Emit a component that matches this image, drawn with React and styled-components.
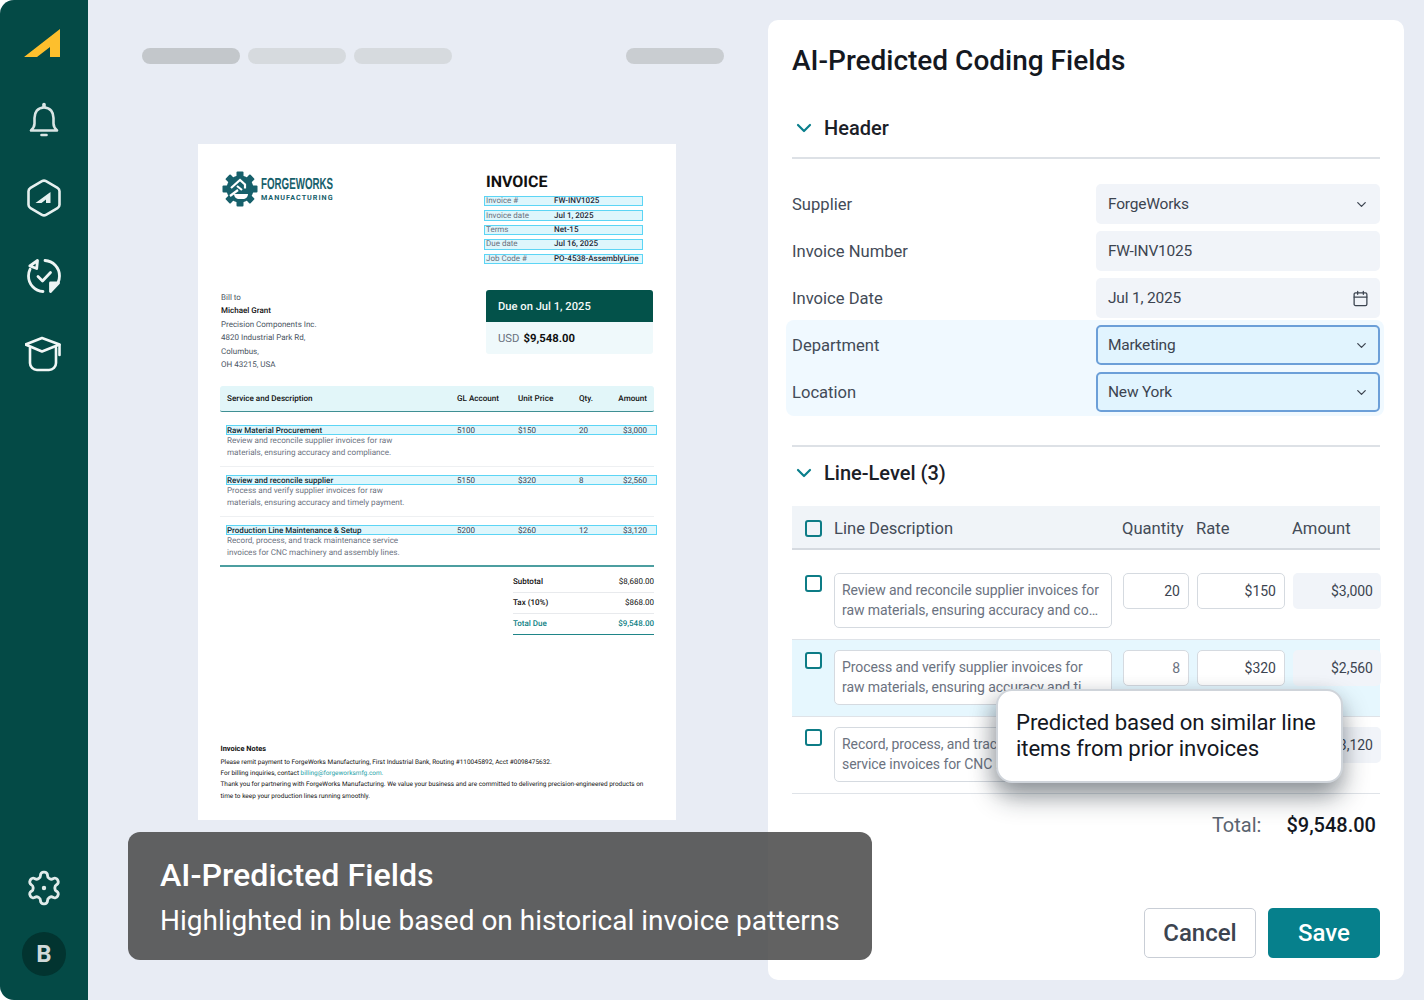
import React from 'react';
import styled, { createGlobalStyle } from 'styled-components';
import { Calendar, ChevronDown } from 'lucide-react';

const GlobalStyle = createGlobalStyle`
  html, body {
    margin: 0;
    padding: 0;
    background: #fff;
  }
  * {
    box-sizing: border-box;
  }
  body {
    font-family: Roboto, "Liberation Sans", sans-serif;
  }
`;

const Page = styled.div`
  position: relative;
  display: flex;
  width: 1424px;
  height: 1000px;
  overflow: hidden;
  background: #e8ecf4;
  border-radius: 14px 0 0 14px;
`;

// sidebar
const Sidebar = styled.nav`
  flex: none;
  display: flex;
  flex-direction: column;
  align-items: center;
  width: 88px;
  height: 100%;
  padding: 3px 0 24px;
  background: #044a46;
`;

const NavSlot = styled.div`
  display: flex;
  align-items: center;
  justify-content: center;
  width: 100%;
  height: 78px;
`;

const SidebarFoot = styled.div`
  display: flex;
  flex-direction: column;
  align-items: center;
  gap: 25px;
  margin-top: auto;
`;

const Avatar = styled.div`
  display: flex;
  align-items: center;
  justify-content: center;
  width: 44px;
  height: 44px;
  border-radius: 50%;
  background: #023430;
  color: #cfd9d8;
  font-size: 24px;
  font-weight: 700;
`;

const LogoSvg = styled.svg`
  margin: 2px 4px 0 0;
`;

// invoice preview side
const Preview = styled.section`
  flex: none;
  width: 680px;
  padding: 48px 44px 0 54px;
`;

const Toolbar = styled.div`
  display: flex;
  gap: 8px;
`;

const Pill = styled.div`
  width: 98px;
  height: 16px;
  border-radius: 8px;
  background: ${(p) => p.$tone};
  margin-left: ${(p) => (p.$push ? 'auto' : '0')};
`;

const Sheet = styled.article`
  display: flex;
  flex-direction: column;
  width: 478px;
  height: 676px;
  margin: 80px 0 0 56px;
  padding: 24px 22px 18px;
  background: #fff;
  color: #111;
  font-size: 8px;
  text-rendering: geometricPrecision;
`;

const SheetTop = styled.div`
  display: flex;
  justify-content: space-between;
`;

const Brand = styled.div`
  display: flex;
  align-items: flex-start;
  gap: 3px;
  margin: 3px 0 0 2px;
  color: #17606b;
`;

const BrandText = styled.div`
  display: flex;
  flex-direction: column;
  padding-top: 6px;
`;

const BrandName = styled.span`
  font-family: "Liberation Sans", sans-serif;
  font-size: 16px;
  line-height: 15px;
  font-weight: 700;
  white-space: nowrap;
  transform: scaleX(0.61);
  transform-origin: left center;
  width: 73px;
`;

const BrandSub = styled.span`
  margin-top: 1px;
  font-size: 7.2px;
  line-height: 9px;
  font-weight: 700;
  letter-spacing: 1px;
  white-space: nowrap;
`;

const InvoiceMeta = styled.div`
  display: flex;
  flex-direction: column;
  width: 159px;
  margin-right: 11px;
`;

const InvoiceTitle = styled.h2`
  margin: 5px 0 5px 2px;
  font-size: 16px;
  line-height: 18px;
  font-weight: 700;
  color: #111;
`;

const MetaRow = styled.div`
  display: flex;
  align-items: center;
  height: 10.4px;
  margin-bottom: 4px;
  padding-left: 1px;
  border: 1px solid #5cd5f5;
  background: #def6fc;
  font-size: 8px;
  line-height: 8px;
`;

const MetaLabel = styled.span`
  width: 68px;
  color: #6b7280;
`;

const MetaValue = styled.span`
  font-weight: 500;
  white-space: nowrap;
  color: #1f2937;
`;

const BillRow = styled.div`
  display: flex;
  justify-content: space-between;
  height: 80px;
  margin-top: 22px;
`;

const BillTo = styled.div`
  margin-left: 1px;
  padding-top: 1px;
  line-height: 13.5px;
  color: #4b5563;
`;

const BillName = styled.div`
  font-weight: 500;
  color: #111;
`;

const DueCard = styled.div`
  width: 167px;
  height: 64px;
  margin-right: 1px;
  border-radius: 3px;
  overflow: hidden;
  background: #eff9fb;
`;

const DueHead = styled.div`
  display: flex;
  align-items: center;
  height: 32px;
  padding: 1px 0 0 12px;
  background: #03524a;
  color: #f3faf8;
  font-size: 11.2px;
  font-weight: 500;
`;

const DueBody = styled.div`
  display: flex;
  align-items: center;
  gap: 4px;
  height: 32px;
  padding: 1px 0 0 12px;
  font-size: 11.3px;
  color: #6b7280;
`;

const DueAmount = styled.strong`
  font-weight: 700;
  color: #111;
`;

const ItemHead = styled.div`
  display: grid;
  grid-template-columns: 230px 61px 61px 30px 1fr;
  align-items: center;
  height: 26px;
  margin-top: 16px;
  padding: 0 7px 0 7px;
  border-radius: 3px 3px 2px 2px;
  border-bottom: 1px solid #3f8f93;
  background: #e2f6f9;
  font-size: 8.1px;
  font-weight: 500;
`;

const RightCell = styled.span`
  text-align: right;
`;

const Item = styled.div`
  padding: ${(p) => (p.$first ? '13px' : '8px')} 0 ${(p) => (p.$last ? '6.3px' : '7.3px')} 6px;
  border-bottom: ${(p) => (p.$last ? '2px solid #4c9ea0' : '1px solid #eef0f2')};
`;

const ItemLine = styled.div`
  display: grid;
  grid-template-columns: 230px 61px 61px 30px 1fr;
  align-items: center;
  width: 431px;
  height: 10px;
  padding-right: 9px;
  border: 1px solid #5cd5f5;
  background: #def6fc;
  font-size: 8px;
  color: #374151;
`;

const ItemName = styled.span`
  font-weight: 500;
  color: #0f2a33;
  white-space: nowrap;
`;

const ItemDesc = styled.p`
  width: 190px;
  margin: 0.5px 0 0 1px;
  font-size: 8.1px;
  line-height: 11.6px;
  color: #6b7280;
`;

const Summary = styled.div`
  display: flex;
  flex-direction: column;
  width: 141px;
  margin: 5px 0 0 auto;
`;

const SummaryRow = styled.div`
  display: flex;
  align-items: center;
  justify-content: space-between;
  height: 21px;
  font-size: 8px;
  color: ${(p) => (p.$total ? '#0e7f85' : '#111')};
  border-bottom: 1px solid ${(p) => (p.$total ? '#1f8588' : '#e8eaed')};
`;

const SummaryLabel = styled.span`
  font-weight: 500;
`;

const Notes = styled.div`
  margin-top: auto;
  padding-left: 0.5px;
  font-size: 6.45px;
  line-height: 11.3px;
  color: #111;
`;

const NotesTitle = styled.div`
  margin-bottom: 3px;
  font-size: 7.4px;
  font-weight: 700;
`;

const MailLink = styled.span`
  color: #27a3a8;
`;

const Caption = styled.div`
  position: absolute;
  left: 128px;
  top: 832px;
  z-index: 3;
  width: 744px;
  height: 128px;
  padding: 24px 32px;
  border-radius: 12px;
  background: rgba(72, 72, 72, 0.86);
  color: #fff;
`;

const CaptionTitle = styled.div`
  font-size: 32.2px;
  line-height: 38px;
  font-weight: 500;
`;

const CaptionText = styled.div`
  margin-top: 8px;
  font-size: 28px;
  line-height: 38px;
  white-space: nowrap;
`;

// coding form side
const Panel = styled.section`
  position: relative;
  display: flex;
  flex-direction: column;
  flex: none;
  width: 636px;
  height: 960px;
  margin-top: 20px;
  padding: 21px 24px 22px;
  border-radius: 10px;
  background: #fff;
  color: #374151;
`;

const PanelTitle = styled.h1`
  margin: 0;
  font-size: 28px;
  line-height: 40px;
  font-weight: 500;
  color: #14181f;
`;

const SectionHead = styled.div`
  display: flex;
  align-items: center;
  gap: 8px;
  height: 30px;
  margin-top: ${(p) => p.$top}px;
  font-size: 20px;
  font-weight: 500;
  color: #1b2027;
`;

const Chevron = styled(ChevronDown)`
  flex: none;
  color: #0a7f8c;
`;

const Divider = styled.div`
  height: 2px;
  margin-top: ${(p) => p.$top}px;
  background: #dde1e6;
`;

const FieldList = styled.div`
  display: flex;
  flex-direction: column;
  gap: 7px;
  margin-top: 25px;
`;

const FieldRow = styled.div`
  display: flex;
  align-items: center;
  justify-content: space-between;
  height: 40px;
  font-size: 16.6px;
  color: #434b57;
`;

const Control = styled.div`
  display: flex;
  align-items: center;
  justify-content: space-between;
  width: 284px;
  height: 40px;
  padding: 0 ${(p) => (p.$ai ? '9px' : '11px')} 0 ${(p) => (p.$ai ? '10px' : '12px')};
  border-radius: 5px;
  font-size: 15.5px;
  letter-spacing: -0.2px;
  color: #3c4450;
  background: ${(p) => (p.$ai ? '#e1f4fe' : '#f1f4f9')};
  border: ${(p) => (p.$ai ? '2px solid #6c9fd8' : '0')};
`;

const AiGroup = styled.div`
  display: flex;
  flex-direction: column;
  gap: 7px;
  margin: -5px -4px -3px -6px;
  padding: 5px 4px 4px 6px;
  border-radius: 8px;
  background: #f0f9ff;
`;

const TableHead = styled.div`
  display: grid;
  grid-template-columns: 42px 278px 77px 96px 96px;
  align-items: center;
  height: 44px;
  margin-top: 18px;
  padding-top: 2px;
  background: #f0f4f8;
  border-bottom: 2px solid #d5dae0;
  font-size: 16.6px;
  color: #434b57;
`;

const HeadLabel = styled.span`
  padding-left: ${(p) => p.$left || 0}px;
  white-space: nowrap;
`;

const Row = styled.div`
  display: grid;
  grid-template-columns: 42px 278px 77px 96px 96px;
  align-items: start;
  padding: ${(p) => (p.$first ? '23px' : '10px')} 0 11px;
  border-bottom: 1px solid #dfe3e8;
  background: ${(p) => (p.$ai ? '#e6f7fe' : 'transparent')};
`;

const Check = styled.span`
  display: block;
  width: 17px;
  height: 17px;
  margin: ${(p) => (p.$head ? '0' : '2px')} 0 0 13px;
  border: 2px solid #0d7c86;
  border-radius: 3px;
  background: ${(p) => (p.$head ? 'transparent' : '#fff')};
`;

const DescBox = styled.div`
  height: 55px;
  padding: 6px 11px 0 7px;
  border: 1px solid #d5dae0;
  border-radius: 5px;
  background: #fff;
  font-size: 14px;
  letter-spacing: -0.07px;
  line-height: 20px;
  color: #6b7280;
`;

const DescLine = styled.div`
  overflow: hidden;
  white-space: nowrap;
  text-overflow: ellipsis;
`;

const NumBox = styled.div`
  display: flex;
  align-items: center;
  justify-content: flex-end;
  justify-self: end;
  width: ${(p) => p.$width}px;
  height: 36px;
  padding-right: 8px;
  border: ${(p) => (p.$calc ? '0' : '1px solid #d5dae0')};
  border-radius: 5px;
  background: ${(p) => (p.$calc ? '#f1f4f9' : '#fff')};
  font-size: 14px;
  color: ${(p) => (p.$muted ? '#6b7280' : '#3c4450')};
`;

const TotalRow = styled.div`
  display: flex;
  justify-content: flex-end;
  align-items: center;
  gap: 25px;
  height: 24px;
  margin-top: 19px;
  padding-right: 4px;
  font-size: 20px;
  color: #5b6470;
`;

const TotalValue = styled.strong`
  font-weight: 500;
  color: #14181f;
`;

const Actions = styled.div`
  display: flex;
  justify-content: flex-end;
  gap: 12px;
  margin-top: auto;
`;

const Button = styled.button`
  width: 112px;
  height: 50px;
  border-radius: 5px;
  font-family: inherit;
  font-size: 24px;
  font-weight: 500;
  color: ${(p) => (p.$primary ? '#fff' : '#3c4450')};
  background: ${(p) => (p.$primary ? '#06808c' : '#fff')};
  border: ${(p) => (p.$primary ? '0' : '1.5px solid #c9ced6')};
`;

const Tooltip = styled.div`
  position: absolute;
  left: 228px;
  top: 669px;
  z-index: 2;
  width: 347px;
  height: 94px;
  padding: 18px 14px 0 18px;
  border: 2px solid #cfd4da;
  border-radius: 16px;
  background: #fff;
  box-shadow: 0 14px 26px rgba(20, 30, 40, 0.42), -6px 6px 20px rgba(20, 30, 40, 0.14);
  font-size: 22.2px;
  letter-spacing: -0.1px;
  line-height: 26px;
  color: #14181f;
`;

const LogoMark = () => (
  <LogoSvg width="36" height="28" viewBox="0 0 36 28">
    <path d="M0 28 L36 0 V28 H26 V18 L13 28 Z" fill="#fdbf2d" />
  </LogoSvg>
);

const BellIcon = () => (
  <svg width="30" height="36" viewBox="0 0 30 36" fill="none" stroke="#d9e5e4" strokeWidth="2.6" strokeLinecap="round" strokeLinejoin="round">
    <path d="M15 5.5c-6.5 0-9.5 5-9.5 10.5v5.5c0 3-1.5 5-3.5 7h26c-2-2-3.500-4-3.500-7V16c0-5.500-3-10.500-9.500-10.500z" />
    <path d="M15 2.500v2" strokeWidth="3.600" />
    <path d="M12.500 33h5" strokeWidth="2.600" />
  </svg>
);

const HexIcon = () => (
  <svg width="34" height="38" viewBox="0 0 34 38" fill="none">
    <path d="M15 2.200a4 4 0 0 1 4 0l11.500 6.600a4 4 0 0 1 2 3.500v13.400a4 4 0 0 1-2 3.500L19 35.800a4 4 0 0 1-4 0L3.500 29.200a4 4 0 0 1-2-3.500V12.300a4 4 0 0 1 2-3.500z" stroke="#e6f0ef" strokeWidth="2.600" />
    <path d="M8.500 24 L23.500 13 V24 H19 V20.500 L14.500 24 Z" fill="#e6f0ef" />
  </svg>
);

const SyncCheckIcon = () => (
  <svg width="36" height="36" viewBox="0 0 36 36" fill="none" stroke="#eef5f4" strokeWidth="2.800" strokeLinecap="round" strokeLinejoin="round">
    <path d="M19 2.500c8 .5 14.500 7 14.500 15.500 0 2.500-.6 4.800-1.600 6.800" />
    <path d="M17 33.500c-8-.5-14.500-7-14.500-15.500 0-2.500.6-4.800 1.600-6.800" />
    <path d="M11.500 2.500l-.8 8-6.900-2.500z" />
    <path d="M24.500 33.500v-8.500h8z" fill="#eef5f4" />
    <path d="M12 18.500l4.500 4.500 8-8.500" />
  </svg>
);

const CapIcon = () => (
  <svg width="38" height="36" viewBox="1 0 38 36" fill="none" stroke="#f2f7f6" strokeWidth="2.600" strokeLinecap="round" strokeLinejoin="round">
    <path d="M18 2 L1.500 8.500 18 15.500 35.500 8.500z" />
    <path d="M35.500 9v10" />
    <path d="M6 12v15a7 7 0 0 0 7 7h12a7 7 0 0 0 7-7V12" />
  </svg>
);

const GearIcon = () => (
  <svg width="38" height="38" viewBox="0 0 24 24" fill="none" stroke="#e0ebea" strokeWidth="1.800" strokeLinecap="round" strokeLinejoin="round">
    <path d="M12.220 2h-.44a2 2 0 0 0-2 2v.18a2 2 0 0 1-1 1.730l-.43.25a2 2 0 0 1-2 0l-.15-.08a2 2 0 0 0-2.730.73l-.22.38a2 2 0 0 0 .73 2.730l.15.1a2 2 0 0 1 1 1.720v.51a2 2 0 0 1-1 1.740l-.15.09a2 2 0 0 0-.73 2.730l.22.38a2 2 0 0 0 2.730.73l.15-.08a2 2 0 0 1 2 0l.43.25a2 2 0 0 1 1 1.730V20a2 2 0 0 0 2 2h.44a2 2 0 0 0 2-2v-.18a2 2 0 0 1 1-1.730l.43-.25a2 2 0 0 1 2 0l.15.08a2 2 0 0 0 2.730-.73l.22-.39a2 2 0 0 0-.73-2.730l-.15-.08a2 2 0 0 1-1-1.740v-.5a2 2 0 0 1 1-1.740l.15-.09a2 2 0 0 0 .73-2.730l-.22-.38a2 2 0 0 0-2.730-.73l-.15.08a2 2 0 0 1-2 0l-.43-.25a2 2 0 0 1-1-1.730V4a2 2 0 0 0-2-2z" />
    <circle cx="12" cy="12" r="1.400" fill="#e0ebea" stroke="none" />
  </svg>
);

const ForgeGear = () => (
  <svg width="36" height="36" viewBox="0 0 36 36">
    <g fill="#17606b">
      <circle cx="18" cy="18" r="13.500" />
      {[0, 45, 90, 135, 180, 225, 270, 315].map((deg) => (
        <rect key={deg} x="14.500" y="0.500" width="7" height="7" rx="1" transform={`rotate(${deg} 18 18)`} />
      ))}
    </g>
    <path d="M9 17l9-8 5 4.500v4M15 15l5 4M8 25l8-6" fill="none" stroke="#fff" strokeWidth="2.200" />
    <path d="M12 23h14c0 3-2.500 5-5 5h-4c-2.500 0-5-2-5-5z" fill="#fff" />
  </svg>
);

const lineItems = [
  {
    name: 'Raw Material Procurement',
    gl: '5100',
    price: '$150',
    qty: '20',
    amount: '$3,000',
    desc: 'Review and reconcile supplier invoices for raw materials, ensuring accuracy and compliance.',
  },
  {
    name: 'Review and reconcile supplier',
    gl: '5150',
    price: '$320',
    qty: '8',
    amount: '$2,560',
    desc: 'Process and verify supplier invoices for raw materials, ensuring accuracy and timely payment.',
  },
  {
    name: 'Production Line Maintenance & Setup',
    gl: '5200',
    price: '$260',
    qty: '12',
    amount: '$3,120',
    desc: 'Record, process, and track maintenance service invoices for CNC machinery and assembly lines.',
  },
];

const metaRows = [
  ['Invoice #', 'FW-INV1025'],
  ['Invoice date', 'Jul 1, 2025'],
  ['Terms', 'Net-15'],
  ['Due date', 'Jul 16, 2025'],
  ['Job Code #', 'PO-4538-AssemblyLine'],
];

const codingRows = [
  {
    lines: ['Review and reconcile supplier invoices for', 'raw materials, ensuring accuracy and compliance.'],
    qty: '20',
    rate: '$150',
    amount: '$3,000',
  },
  {
    lines: ['Process and verify supplier invoices for', 'raw materials, ensuring accuracy and timely payment.'],
    qty: '8',
    rate: '$320',
    amount: '$2,560',
    ai: true,
  },
  {
    lines: ['Record, process, and track maintenance', 'service invoices for CNC machinery and assembly.'],
    qty: '12',
    rate: '$260',
    amount: '$3,120',
  },
];

const Select = ({ value, ai }) => (
  <Control $ai={ai}>
    {value}
    <ChevronDown size={15} strokeWidth={2} color="#3c4450" />
  </Control>
);

const App = () => (
  <Page>
    <GlobalStyle />
    <Sidebar>
      <NavSlot><LogoMark /></NavSlot>
      <NavSlot><BellIcon /></NavSlot>
      <NavSlot><HexIcon /></NavSlot>
      <NavSlot><SyncCheckIcon /></NavSlot>
      <NavSlot><CapIcon /></NavSlot>
      <SidebarFoot>
        <GearIcon />
        <Avatar>B</Avatar>
      </SidebarFoot>
    </Sidebar>

    <Preview>
      <Toolbar>
        <Pill $tone="#c3c7cb" />
        <Pill $tone="#d6dade" />
        <Pill $tone="#d6dade" />
        <Pill $tone="#c9cdd1" $push />
      </Toolbar>
      <Sheet>
        <SheetTop>
          <Brand>
            <ForgeGear />
            <BrandText>
              <BrandName>FORGEWORKS</BrandName>
              <BrandSub>MANUFACTURING</BrandSub>
            </BrandText>
          </Brand>
          <InvoiceMeta>
            <InvoiceTitle>INVOICE</InvoiceTitle>
            {metaRows.map(([label, value]) => (
              <MetaRow key={label}>
                <MetaLabel>{label}</MetaLabel>
                <MetaValue>{value}</MetaValue>
              </MetaRow>
            ))}
          </InvoiceMeta>
        </SheetTop>
        <BillRow>
          <BillTo>
            Bill to
            <BillName>Michael Grant</BillName>
            Precision Components Inc.
            <br />
            4820 Industrial Park Rd,
            <br />
            Columbus,
            <br />
            OH 43215, USA
          </BillTo>
          <DueCard>
            <DueHead>Due on Jul 1, 2025</DueHead>
            <DueBody>
              USD <DueAmount>$9,548.00</DueAmount>
            </DueBody>
          </DueCard>
        </BillRow>
        <ItemHead>
          <span>Service and Description</span>
          <span>GL Account</span>
          <span>Unit Price</span>
          <span>Qty.</span>
          <RightCell>Amount</RightCell>
        </ItemHead>
        {lineItems.map((item, i) => (
          <Item key={item.gl} $first={i === 0} $last={i === lineItems.length - 1}>
            <ItemLine>
              <ItemName>{item.name}</ItemName>
              <span>{item.gl}</span>
              <span>{item.price}</span>
              <span>{item.qty}</span>
              <RightCell>{item.amount}</RightCell>
            </ItemLine>
            <ItemDesc>{item.desc}</ItemDesc>
          </Item>
        ))}
        <Summary>
          <SummaryRow>
            <SummaryLabel>Subtotal</SummaryLabel>
            <span>$8,680.00</span>
          </SummaryRow>
          <SummaryRow>
            <SummaryLabel>Tax (10%)</SummaryLabel>
            <span>$868.00</span>
          </SummaryRow>
          <SummaryRow $total>
            <SummaryLabel>Total Due</SummaryLabel>
            <SummaryLabel>$9,548.00</SummaryLabel>
          </SummaryRow>
        </Summary>
        <Notes>
          <NotesTitle>Invoice Notes</NotesTitle>
          Please remit payment to ForgeWorks Manufacturing, First Industrial Bank, Routing #110045892, Acct #0098475632.
          <br />
          For billing inquiries, contact <MailLink>billing@forgeworksmfg.com.</MailLink>
          <br />
          Thank you for partnering with ForgeWorks Manufacturing. We value your business and are committed to delivering precision-engineered products on time to keep your production lines running smoothly.
        </Notes>
      </Sheet>
    </Preview>

    <Panel>
      <PanelTitle>AI-Predicted Coding Fields</PanelTitle>
      <SectionHead $top={32}>
        <Chevron size={24} strokeWidth={2.2} />
        Header
      </SectionHead>
      <Divider $top={14} />
      <FieldList>
        <FieldRow>Supplier<Select value="ForgeWorks" /></FieldRow>
        <FieldRow>Invoice Number<Control>FW-INV1025</Control></FieldRow>
        <FieldRow>
          Invoice Date
          <Control>
            Jul 1, 2025
            <Calendar size={17} strokeWidth={1.8} color="#3c4450" />
          </Control>
        </FieldRow>
        <AiGroup>
          <FieldRow>Department<Select value="Marketing" ai /></FieldRow>
          <FieldRow>Location<Select value="New York" ai /></FieldRow>
        </AiGroup>
      </FieldList>
      <Divider $top={32} />
      <SectionHead $top={11}>
        <Chevron size={24} strokeWidth={2.2} />
        Line-Level (3)
      </SectionHead>
      <TableHead>
        <Check $head />
        <HeadLabel>Line Description</HeadLabel>
        <HeadLabel $left={10}>Quantity</HeadLabel>
        <HeadLabel $left={7}>Rate</HeadLabel>
        <HeadLabel $left={7}>Amount</HeadLabel>
      </TableHead>
      {codingRows.map((row, i) => (
        <Row key={row.qty} $first={i === 0} $ai={row.ai}>
          <Check />
          <DescBox>
            <DescLine>{row.lines[0]}</DescLine>
            <DescLine>{row.lines[1]}</DescLine>
          </DescBox>
          <NumBox $width={66} $muted={row.ai}>{row.qty}</NumBox>
          <NumBox $width={88}>{row.rate}</NumBox>
          <NumBox $width={88} $calc>{row.amount}</NumBox>
        </Row>
      ))}
      <TotalRow>
        Total:
        <TotalValue>$9,548.00</TotalValue>
      </TotalRow>
      <Actions>
        <Button>Cancel</Button>
        <Button $primary>Save</Button>
      </Actions>
      <Tooltip>Predicted based on similar line items from prior invoices</Tooltip>
    </Panel>

    <Caption>
      <CaptionTitle>AI-Predicted Fields</CaptionTitle>
      <CaptionText>Highlighted in blue based on historical invoice patterns</CaptionText>
    </Caption>
  </Page>
);

export default App;
